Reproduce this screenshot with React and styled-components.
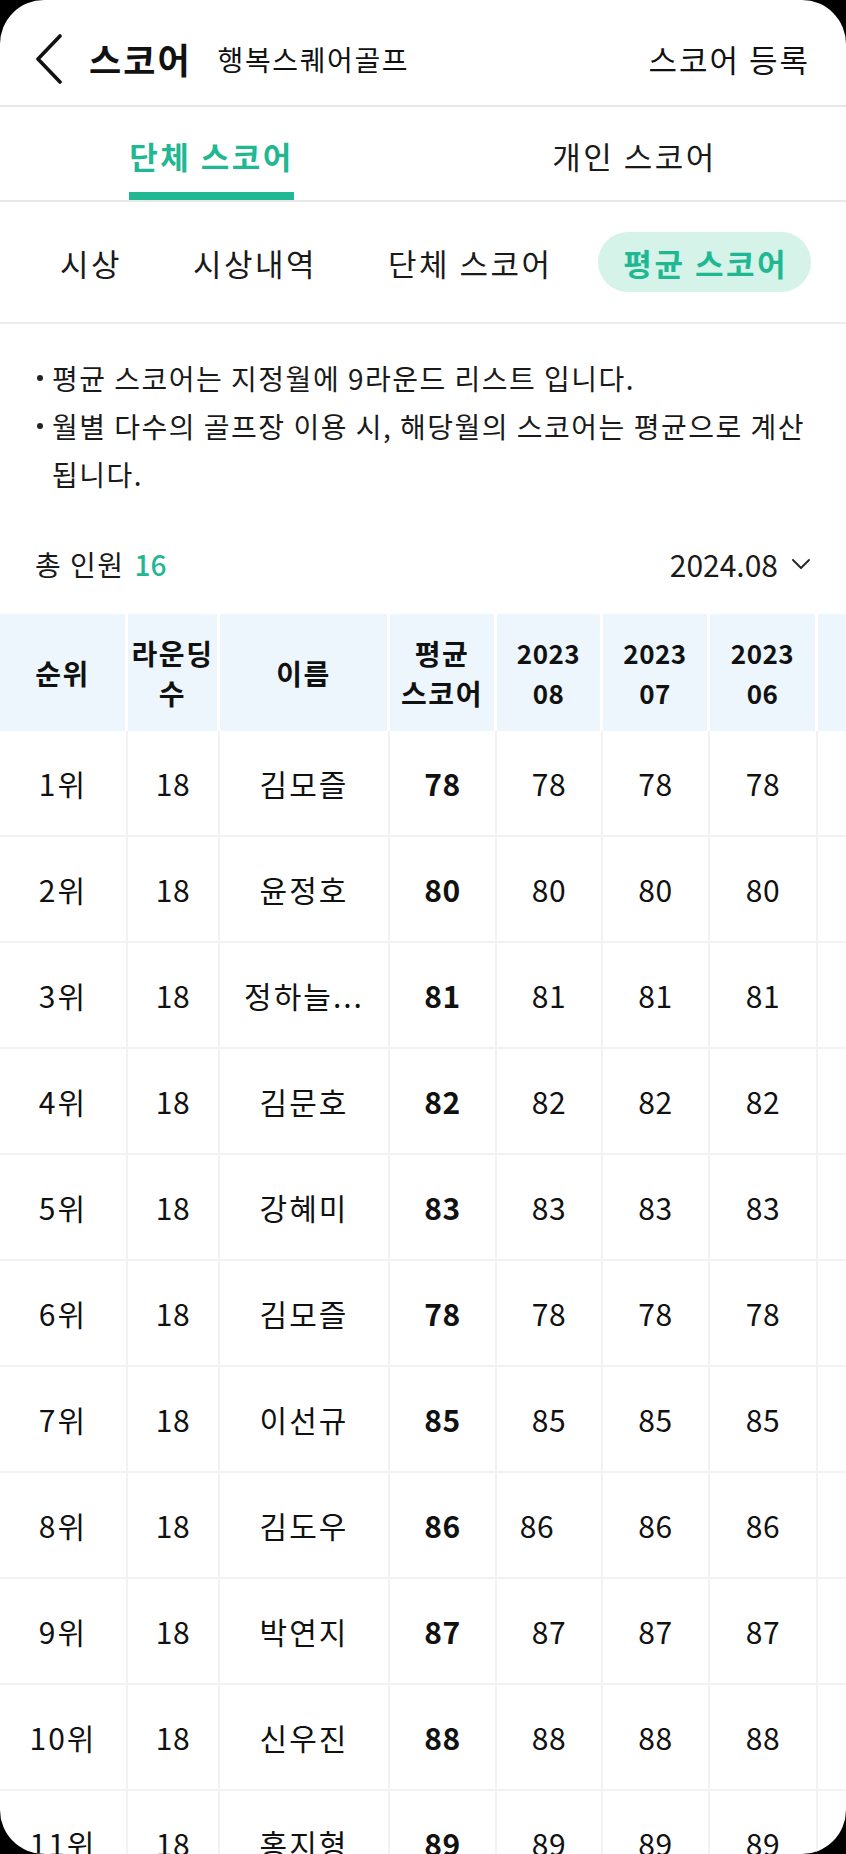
import React, { useState } from "react";
import styled, { createGlobalStyle } from "styled-components";

const GREEN = "#1fb893";

const GlobalStyle = createGlobalStyle`
  html, body {
    margin: 0;
    padding: 0;
    background: #000;
  }
  body {
    font-family: "Noto Sans CJK KR", "Noto Sans", sans-serif;
    color: #111;
    word-break: keep-all;
  }
  * {
    box-sizing: border-box;
  }
`;

const Screen = styled.div`
  width: 846px;
  height: 1854px;
  background: #fff;
  border-radius: 44px;
  overflow: hidden;
  display: flex;
  flex-direction: column;
`;

const Header = styled.header`
  height: 107px;
  flex-shrink: 0;
  display: flex;
  align-items: center;
  padding: 12px 36px 0 35px;
  border-bottom: 2px solid #e6e6e6;
  .title {
    margin-left: 26px;
    font-size: 35px;
    font-weight: 700;
    letter-spacing: 2px;
  }
  .club {
    margin-left: 26px;
    font-size: 28px;
    font-weight: 400;
    letter-spacing: 1.6px;
  }
  .register {
    margin-left: auto;
    font-size: 31px;
    font-weight: 400;
    letter-spacing: 2px;
    background: none;
    border: none;
    padding: 0;
    font-family: inherit;
    color: #111;
  }
`;

const BackButton = styled.button`
  display: flex;
  align-items: center;
  background: none;
  border: none;
  padding: 0;
  cursor: pointer;
`;

const TabBar = styled.nav`
  height: 95px;
  flex-shrink: 0;
  display: flex;
  border-bottom: 2px solid #e8e8e8;
`;

const TabItem = styled.div`
  flex: 1;
  display: flex;
  justify-content: center;
  align-items: flex-end;
  cursor: pointer;
`;

const TabLabel = styled.span`
  font-size: 31px;
  line-height: 40px;
  letter-spacing: 2.5px;
  padding-bottom: 16px;
  font-weight: ${(p) => (p.$active ? 700 : 400)};
  color: ${(p) => (p.$active ? GREEN : "#1a1a1a")};
  border-bottom: 8px solid ${(p) => (p.$active ? GREEN : "transparent")};
`;

const SubTabs = styled.div`
  height: 122px;
  flex-shrink: 0;
  display: flex;
  align-items: center;
  justify-content: space-between;
  padding: 0 35px;
  border-bottom: 2px solid #ececec;
`;

const Pill = styled.button`
  height: 60px;
  padding: 0 23px 0 25px;
  border: none;
  border-radius: 30px;
  font-family: inherit;
  font-size: 31px;
  letter-spacing: 2.5px;
  cursor: pointer;
  background: ${(p) => (p.$active ? "#d6f3ea" : "transparent")};
  color: ${(p) => (p.$active ? GREEN : "#1a1a1a")};
  font-weight: ${(p) => (p.$active ? 700 : 400)};
`;

const Notes = styled.ul`
  list-style: none;
  margin: 0;
  padding: 30px 16px 0 33px;
  font-size: 28px;
  line-height: 48px;
  letter-spacing: 1.5px;
  color: #1a1a1a;
`;

const NoteItem = styled.li`
  display: flex;
`;

const Bullet = styled.span`
  flex-shrink: 0;
  width: 19px;
  height: 48px;
  display: flex;
  align-items: center;
  padding-left: 4px;
  &::before {
    content: "";
    width: 6px;
    height: 6px;
    border-radius: 50%;
    background: #222;
  }
`;

const Summary = styled.div`
  display: flex;
  align-items: center;
  justify-content: space-between;
  padding: 44px 36px 28px 35px;
  line-height: 44px;
  .total {
    font-size: 28px;
    letter-spacing: 1.5px;
    color: #1a1a1a;
  }
  .total b {
    color: ${GREEN};
    font-weight: 500;
    margin-left: 10px;
    letter-spacing: 0;
  }
`;

const MonthSelect = styled.button`
  display: flex;
  align-items: center;
  gap: 14px;
  border: none;
  background: none;
  padding: 0;
  font-family: inherit;
  font-size: 30px;
  color: #1a1a1a;
`;

const TableWrap = styled.div`
  flex: 1;
  overflow: hidden;
`;

const COLS = "128px 92px 170px 107px 106px 107px 108px 1fr";

const HeadRow = styled.div`
  display: grid;
  grid-template-columns: ${COLS};
  height: 117px;
  background: #edf6fc;
`;

const HeadCell = styled.div`
  display: flex;
  align-items: center;
  justify-content: center;
  text-align: center;
  border-right: 3px solid #fff;
  font-size: ${(p) => (p.$num ? "26px" : "28px")};
  letter-spacing: ${(p) => (p.$num ? "0.5px" : "1.5px")};
  font-weight: 700;
  line-height: 40px;
  color: #111;
  &:last-child {
    border-right: none;
  }
`;

const Row = styled.div`
  display: grid;
  grid-template-columns: ${COLS};
  height: 106px;
  border-bottom: 2px solid #f2f2f2;
`;

const Cell = styled.div`
  display: flex;
  align-items: center;
  justify-content: center;
  border-right: 2px solid #f2f2f2;
  font-size: 30px;
  letter-spacing: ${(p) => (p.$text ? "2px" : "0.5px")};
  font-weight: ${(p) => (p.$bold ? 700 : 400)};
  padding-right: ${(p) => p.$shift || 0}px;
  color: #111;
  white-space: nowrap;
  &:last-child {
    border-right: none;
  }
`;

const rows = [
  { name: "김모즐", score: 78 },
  { name: "윤정호", score: 80 },
  { name: "정하늘...", score: 81 },
  { name: "김문호", score: 82 },
  { name: "강혜미", score: 83 },
  { name: "김모즐", score: 78 },
  { name: "이선규", score: 85 },
  { name: "김도우", score: 86, shift: 24 },
  { name: "박연지", score: 87 },
  { name: "신우진", score: 88 },
  { name: "홍지형", score: 89 },
];

const months = ["08", "07", "06"];

const Chevron = () => (
  <svg width="28" height="50" viewBox="0 0 28 50" fill="none">
    <polyline
      points="25,2 3,25 25,48"
      stroke="#111"
      strokeWidth="3.6"
      strokeLinecap="round"
      strokeLinejoin="round"
    />
  </svg>
);

const ChevronDown = () => (
  <svg width="18" height="10" viewBox="0 0 18 10" fill="none">
    <polyline
      points="1,1 9,9 17,1"
      stroke="#222"
      strokeWidth="1.8"
      strokeLinecap="round"
      strokeLinejoin="round"
    />
  </svg>
);

const App = () => {
  const [tab, setTab] = useState("group");
  const [sub, setSub] = useState("avg");
  const subTabs = [
    { key: "award", label: "시상" },
    { key: "history", label: "시상내역" },
    { key: "group", label: "단체 스코어" },
    { key: "avg", label: "평균 스코어" },
  ];

  return (
    <>
      <GlobalStyle />
      <Screen>
        <Header>
          <BackButton aria-label="뒤로">
            <Chevron />
          </BackButton>
          <span className="title">스코어</span>
          <span className="club">행복스퀘어골프</span>
          <button className="register">스코어 등록</button>
        </Header>

        <TabBar>
          <TabItem onClick={() => setTab("group")}>
            <TabLabel $active={tab === "group"}>단체 스코어</TabLabel>
          </TabItem>
          <TabItem onClick={() => setTab("personal")}>
            <TabLabel $active={tab === "personal"}>개인 스코어</TabLabel>
          </TabItem>
        </TabBar>

        <SubTabs>
          {subTabs.map((s) => (
            <Pill key={s.key} $active={sub === s.key} onClick={() => setSub(s.key)}>
              {s.label}
            </Pill>
          ))}
        </SubTabs>

        <Notes>
          <NoteItem>
            <Bullet />
            <span>평균 스코어는 지정월에 9라운드 리스트 입니다.</span>
          </NoteItem>
          <NoteItem>
            <Bullet />
            <span>월별 다수의 골프장 이용 시, 해당월의 스코어는 평균으로 계산 됩니다.</span>
          </NoteItem>
        </Notes>

        <Summary>
          <span className="total">
            총 인원<b>16</b>
          </span>
          <MonthSelect>
            2024.08
            <ChevronDown />
          </MonthSelect>
        </Summary>

        <TableWrap>
          <HeadRow>
            <HeadCell>순위</HeadCell>
            <HeadCell>
              라운딩
              <br />수
            </HeadCell>
            <HeadCell>이름</HeadCell>
            <HeadCell>
              평균
              <br />
              스코어
            </HeadCell>
            {months.map((m) => (
              <HeadCell key={m} $num>
                2023
                <br />
                {m}
              </HeadCell>
            ))}
            <HeadCell />
          </HeadRow>
          {rows.map((r, i) => (
            <Row key={i}>
              <Cell $text>{i + 1}위</Cell>
              <Cell>18</Cell>
              <Cell $text>{r.name}</Cell>
              <Cell $bold>{r.score}</Cell>
              {months.map((m, j) => (
                <Cell key={m} $shift={j === 0 ? r.shift : 0}>
                  {r.score}
                </Cell>
              ))}
              <Cell />
            </Row>
          ))}
        </TableWrap>
      </Screen>
    </>
  );
};

export default App;
